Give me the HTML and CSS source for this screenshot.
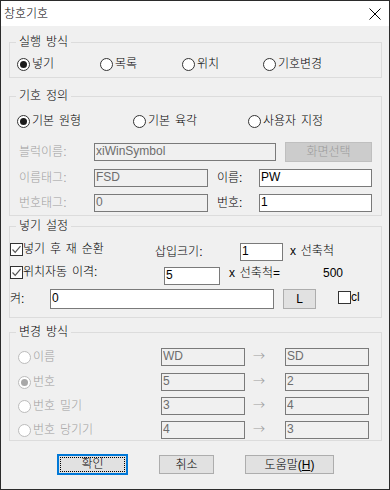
FILE: index.html
```html
<!DOCTYPE html>
<html lang="ko">
<head>
  <meta charset="UTF-8">
  <title>창호기호</title>
  <link rel="stylesheet" href="styles.css">
</head>
<body>
  <div class="window">
    <div class="titlebar">
      <span>창호기호</span>
      <svg class="close" width="12" height="12" viewBox="0 0 12 12">
        <path d="M0.5 0.5 L11.5 11.5 M11.5 0.5 L0.5 11.5" stroke="#000" stroke-width="1" fill="none"/>
      </svg>
    </div>

    <div class="content">
      <!-- 실행 방식 -->
      <div class="group g-run">
        <div class="group-title">실행 방식</div>
        <div class="run-row">
          <label class="radio on"><span class="circle"></span>넣기</label>
          <label class="radio"><span class="circle"></span>목록</label>
          <label class="radio"><span class="circle"></span>위치</label>
          <label class="radio"><span class="circle"></span>기호변경</label>
        </div>
      </div>

      <!-- 기호 정의 -->
      <div class="group g-def">
        <div class="group-title">기호 정의</div>
        <div class="def-radios">
          <label class="radio on"><span class="circle"></span>기본 원형</label>
          <label class="radio"><span class="circle"></span>기본 육각</label>
          <label class="radio"><span class="circle"></span>사용자 지정</label>
        </div>
        <div class="row def-row1">
          <span class="lbl-def dis">블럭이름:</span>
          <input class="box w182" type="text" value="xiWinSymbol" disabled>
          <button class="btn btn-dis pick">화면선택</button>
        </div>
        <div class="row def-row2">
          <span class="lbl-def dis">이름태그:</span>
          <input class="box w114" type="text" value="FSD" disabled>
          <span class="lbl-small">이름:</span>
          <input class="box w113" type="text" value="PW">
        </div>
        <div class="row def-row3">
          <span class="lbl-def dis">번호태그:</span>
          <input class="box w114" type="text" value="0" disabled>
          <span class="lbl-small">번호:</span>
          <input class="box w113" type="text" value="1">
        </div>
      </div>

      <!-- 넣기 설정 -->
      <div class="group g-ins">
        <div class="group-title">넣기 설정</div>
        <div class="row ins-row1">
          <label class="check on up3 w145"><span class="cbox"><svg width="11" height="11" viewBox="0 0 11 11"><path d="M1.5 5.5 L4.2 8.3 L9.5 2.2" stroke="#555" stroke-width="1.2" fill="none"/></svg></span>넣기 후 재 순환</label>
          <span class="w85">삽입크기:</span>
          <input class="box w43" type="text" value="1">
          <span class="scale1 up1">x 선축척</span>
        </div>
        <div class="row ins-row2">
          <label class="check on up4 w154"><span class="cbox"><svg width="11" height="11" viewBox="0 0 11 11"><path d="M1.5 5.5 L4.2 8.3 L9.5 2.2" stroke="#555" stroke-width="1.2" fill="none"/></svg></span>위치자동 이격:</label>
          <input class="box w56" type="text" value="5">
          <span class="scale2 up3">x 선축척=</span>
          <span class="up3">500</span>
        </div>
        <div class="row ins-row3">
          <span class="w40">켜:</span>
          <input class="box w224 tall" type="text" value="0">
          <button class="btn btn-l">L</button>
          <label class="check cl up2"><span class="cbox"></span>cl</label>
        </div>
      </div>

      <!-- 변경 방식 -->
      <div class="group g-chg">
        <div class="group-title">변경 방식</div>
        <div class="row chg-row r1">
          <label class="radio dis-radio w143"><span class="circle"></span>이름</label>
          <input class="box w84" type="text" value="WD" disabled>
          <span class="arrow">→</span>
          <input class="box w84" type="text" value="SD" disabled>
        </div>
        <div class="row chg-row r2">
          <label class="radio dis-radio on w143"><span class="circle"></span>번호</label>
          <input class="box w84" type="text" value="5" disabled>
          <span class="arrow">→</span>
          <input class="box w84" type="text" value="2" disabled>
        </div>
        <div class="row chg-row r3">
          <label class="radio dis-radio w143"><span class="circle"></span>번호 밀기</label>
          <input class="box w84" type="text" value="3" disabled>
          <span class="arrow">→</span>
          <input class="box w84" type="text" value="4" disabled>
        </div>
        <div class="row chg-row r4">
          <label class="radio dis-radio w143"><span class="circle"></span>번호 당기기</label>
          <input class="box w84" type="text" value="4" disabled>
          <span class="arrow">→</span>
          <input class="box w84" type="text" value="3" disabled>
        </div>
      </div>

      <div class="buttons">
        <button class="btn btn-ok"><span class="focus">확인</span></button>
        <button class="btn btn-cancel">취소</button>
        <button class="btn btn-help">도움말(<u>H</u>)</button>
      </div>
    </div>
  </div>
</body>
</html>
```

FILE: styles.css
```css
* {
  box-sizing: border-box;
}

body {
  margin: 0;
  font: 300 12px/14px "Liberation Sans", "Noto Sans CJK KR", sans-serif;
  word-spacing: 1.5px;
  color: #000;
}

.window {
  width: 390px;
  height: 490px;
  border: 1px solid #2b2b2b;
  background: #f0f0f0;
}

.titlebar {
  height: 25px;
  background: #fff;
  display: flex;
  align-items: center;
  justify-content: space-between;
  padding: 0 8px 0 3px;
}

.content {
  padding: 0 7px 0 8px;
}

/* group boxes */
.group {
  border: 1px solid #dcdcdc;
}

.group-title {
  display: table;
  margin: -8px 0 0 6px;
  padding: 0 3px;
  background: #f0f0f0;
  line-height: 14px;
}

.g-run { margin-top: 16px; padding-bottom: 5px; }
.g-def { margin-top: 18px; padding-bottom: 2px; }
.g-ins { margin-top: 10px; padding-bottom: 8px; }
.g-chg { margin-top: 14px; padding-bottom: 1px; }

.row {
  display: flex;
  align-items: center;
  height: 20px;
}

/* radios */
.radio {
  display: flex;
  align-items: center;
  height: 16px;
}

.circle {
  width: 13px;
  height: 13px;
  border: 1px solid #333;
  border-radius: 50%;
  background: #fff;
  margin-right: 2px;
  display: flex;
  align-items: center;
  justify-content: center;
  flex-shrink: 0;
}

.radio.on .circle::after {
  content: "";
  width: 7px;
  height: 7px;
  border-radius: 50%;
  background: #1a1a1a;
}

.dis-radio {
  color: #a0a0a0;
}

.dis-radio .circle {
  border-color: #bcbcbc;
}

.dis-radio.on .circle::after {
  background: #a8a8a8;
}

.run-row {
  display: grid;
  grid-template-columns: 83px 82px 81px auto;
  padding-left: 7px;
  margin-top: 7px;
}

.def-radios {
  display: grid;
  grid-template-columns: 116px 115px auto;
  padding-left: 7px;
  margin-top: 10px;
}

/* checkboxes */
.check {
  display: flex;
  align-items: center;
}

.cbox {
  width: 13px;
  height: 13px;
  border: 1px solid #333;
  background: #fff;
  display: flex;
  align-items: center;
  justify-content: center;
  flex-shrink: 0;
}

/* text boxes */
.box {
  height: 18px;
  border: 1px solid #7a7a7a;
  background: #fff;
  padding: 0 1px 2px;
  margin: 0;
  font: inherit;
  color: #000;
  outline: none;
}

.box:disabled {
  background: #f0f0f0;
  color: #6d6d6d;
  border-color: #7a7a7a;
}

.tall { height: 20px; }

/* buttons */
.btn {
  font: inherit;
  height: 19px;
  padding: 0;
  margin: 0;
  border: 1px solid #adadad;
  background: #e1e1e1;
  color: #000;
}

.btn-dis {
  background: #cccccc;
  border-color: #bfbfbf;
  color: #9a9a9a;
}

.pick {
  width: 87px;
  height: 20px;
  margin-left: 9px;
}

.btn-l {
  width: 33px;
  height: 20px;
  margin-left: 9px;
}

/* 기호 정의 rows */
.def-row1 { margin-top: 13px; }
.def-row2 { margin-top: 6px; }
.def-row3 { margin-top: 5px; }

.lbl-def {
  width: 84px;
  padding-left: 9px;
}

.dis { color: #a0a0a0; }

.lbl-small {
  width: 42px;
  margin-left: 9px;
}

.w182 { width: 182px; }
.w114 { width: 114px; }
.w113 { width: 113px; }

/* 넣기 설정 rows */
.ins-row1 { margin-top: 10px; height: 18px; }
.ins-row2 { margin-top: 6px; height: 18px; }
.ins-row3 { margin-top: 4px; height: 20px; }

.w145 { width: 145px; }
.w154 { width: 154px; }
.w85 { width: 85px; }
.w43 { width: 43px; }
.w56 { width: 56px; }
.w40 { width: 40px; }
.w224 { width: 224px; }

.up1 { margin-bottom: 2px; }
.up2 { margin-bottom: 4px; }
.up3 { margin-bottom: 6px; }
.up4 { margin-bottom: 8px; }

.scale1 { margin-left: 7px; }
.scale2 { margin-left: 9px; width: 94px; }

.cl { margin-left: 22px; }

/* 변경 방식 rows */
.chg-row { height: 18px; }
.chg-row.r1 { margin-top: 9px; }
.chg-row.r2 { margin-top: 7px; }
.chg-row.r3 { margin-top: 6px; }
.chg-row.r4 { margin-top: 6px; }

.w143 {
  width: 151px;
  padding-left: 8px;
}

.w84 { width: 84px; }

.arrow {
  width: 32px;
  margin-left: 8px;
  margin-bottom: 2px;
  color: #a0a0a0;
  font-family: "Noto Sans CJK KR", sans-serif;
  font-size: 12px;
}

/* bottom buttons */
.buttons {
  display: flex;
  margin-top: 14px;
  padding-left: 49px;
}

.btn-ok {
  width: 69px;
  border-color: #0078d7;
  box-shadow: 0 0 0 1px #0078d7;
  padding: 1px;
}

.focus {
  display: block;
  height: 100%;
  border: 1px dotted #000;
  line-height: 13px;
}

.btn-cancel {
  width: 55px;
  margin-left: 32px;
}

.btn-help {
  width: 89px;
  margin-left: 31px;
}
```
